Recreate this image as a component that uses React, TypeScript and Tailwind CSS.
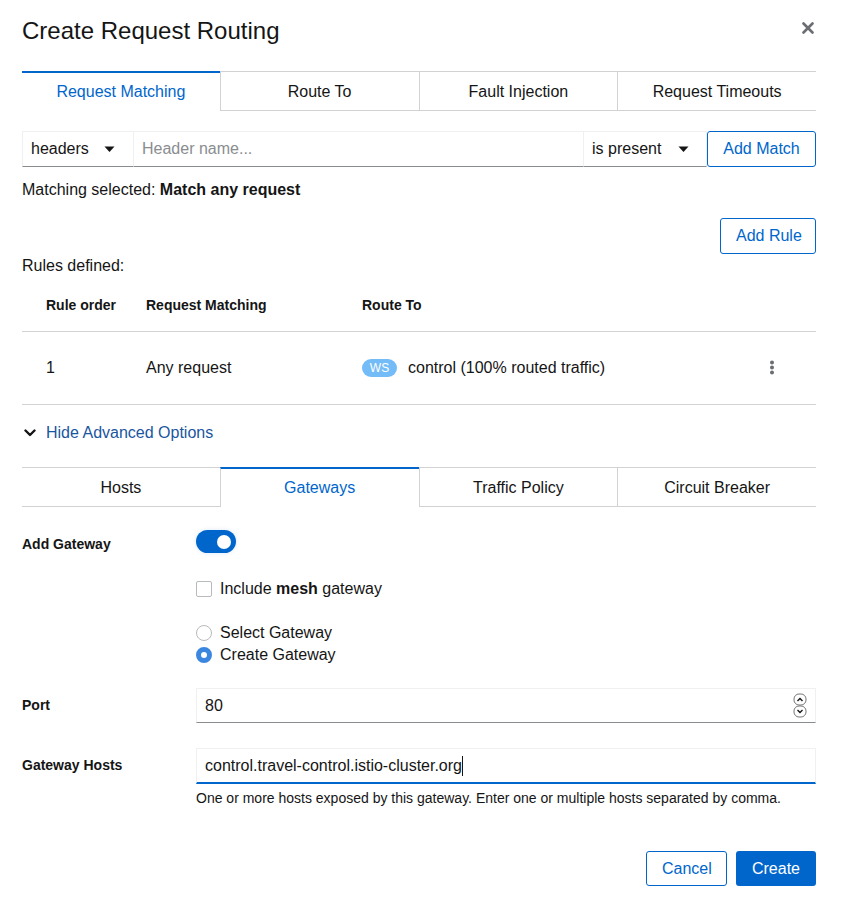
import React from 'react';

const BLUE = '#06c';

type TabsProps = {
    labels: string[];
    active: number;
};

const Tabs: React.FC<TabsProps> = ({ labels, active }) => (
    <div className="flex h-[40px]">
        {labels.map((label, i) => {
            const isActive = i === active;
            return (
                <div
                    key={label}
                    className={[
                        'flex-1 flex items-center justify-center text-[16px]',
                        i > 0 ? 'border-l border-[#d2d2d2]' : '',
                        isActive
                            ? 'border-t-2 border-t-[#06c] text-[#06c]'
                            : 'border-t border-b border-t-[#d2d2d2] border-b-[#d2d2d2] text-[#151515] pt-[1px]',
                    ].join(' ')}
                >
                    {label}
                </div>
            );
        })}
    </div>
);

const Caret: React.FC = () => (
    <svg width="11" height="7" viewBox="0 0 11 7" className="shrink-0">
        <path d="M0.5 0.5 H10.5 L5.5 6 Z" fill="#151515" />
    </svg>
);

const OutlineButton: React.FC<{ children: React.ReactNode; className?: string }> = ({ children, className }) => (
    <button
        className={`h-[35px] px-[15px] border border-[#06c] rounded-[3px] text-[16px] text-[#06c] bg-white whitespace-nowrap ${className ?? ''}`}
    >
        {children}
    </button>
);

const FormRow: React.FC<{ label: string; labelPad: string; children: React.ReactNode; className?: string }> = ({
    label,
    labelPad,
    children,
    className,
}) => (
    <div className={`flex ${className ?? ''}`}>
        <div className={`w-[174px] shrink-0 text-[14px] leading-[21px] font-bold text-[#151515] ${labelPad}`}>{label}</div>
        <div className="flex-1">{children}</div>
    </div>
);

export default function App() {
    return (
        <div className="w-[841px] h-[907px] bg-white pl-[22px] pr-[25px] pt-[14px] text-[#151515] font-['Liberation_Sans',Arial,sans-serif] overflow-hidden">
            {/* header */}
            <div className="flex items-start justify-between">
                <h1 className="text-[24px] leading-[33px] font-normal">Create Request Routing</h1>
                <button className="mt-[8px] mr-[2px]" aria-label="Close">
                    <svg width="12" height="12" viewBox="0 0 12 12">
                        <path d="M1.5 1.5 L10.5 10.5 M10.5 1.5 L1.5 10.5" stroke="#6a6e73" strokeWidth="2.6" strokeLinecap="round" />
                    </svg>
                </button>
            </div>

            <div className="mt-[24px]">
                <Tabs labels={['Request Matching', 'Route To', 'Fault Injection', 'Request Timeouts']} active={0} />
            </div>

            {/* match row */}
            <div className="mt-[20px] flex h-[36px]">
                <div className="w-[112px] flex items-center justify-between pl-[8px] pr-[18px] border border-[#f0f0f0] border-b-[#8a8d90] text-[16px]">
                    <span>headers</span>
                    <Caret />
                </div>
                <div className="flex-1 flex items-center px-[8px] border-t border-[#f0f0f0] border-b border-b-[#8a8d90] text-[16px] text-[#8a8d90]">
                    Header name...
                </div>
                <div className="w-[124px] flex items-center justify-between pl-[8px] pr-[17px] border border-[#f0f0f0] border-b-[#8a8d90] text-[16px]">
                    <span>is present</span>
                    <Caret />
                </div>
                <OutlineButton className="h-[36px] w-[109px] px-0">Add Match</OutlineButton>
            </div>

            <div className="mt-[11px] text-[16px] leading-[24px]">
                Matching selected: <span className="font-bold">Match any request</span>
            </div>

            <div className="mt-[16px] flex justify-end">
                <OutlineButton className="h-[36px] w-[96px] px-0">Add Rule</OutlineButton>
            </div>

            <div className="text-[16px] leading-[24px]">Rules defined:</div>

            {/* rules table */}
            <div className="mt-[2px]">
                <div className="flex items-center h-[52px] border-b border-[#d2d2d2] text-[14px] font-bold">
                    <div className="w-[124px] pl-[24px]">Rule order</div>
                    <div className="w-[216px]">Request Matching</div>
                    <div className="flex-1">Route To</div>
                </div>
                <div className="flex items-center h-[73px] border-b border-[#d2d2d2] text-[16px]">
                    <div className="w-[124px] pl-[24px]">1</div>
                    <div className="w-[216px]">Any request</div>
                    <div className="flex-1 flex items-center">
                        <span className="w-[35px] h-[18px] rounded-full bg-[#73bcf7] text-white text-[12px] flex items-center justify-center mr-[11px]">
                            WS
                        </span>
                        control (100% routed traffic)
                    </div>
                    <div className="w-[53px] flex justify-start pl-[6px]">
                        <svg width="6" height="16" viewBox="0 0 6 16">
                            <circle cx="3" cy="2.5" r="2" fill="#6a6e73" />
                            <circle cx="3" cy="7.5" r="2" fill="#6a6e73" />
                            <circle cx="3" cy="12.5" r="2" fill="#6a6e73" />
                        </svg>
                    </div>
                </div>
            </div>

            {/* advanced options toggle */}
            <div className="mt-[16px] flex items-center h-[24px] text-[16px] text-[#1a56a0]">
                <svg width="12" height="8" viewBox="0 0 12 8" className="ml-[2px] mr-[10px]">
                    <path d="M1.5 1.5 L6 6 L10.5 1.5" stroke="#151515" strokeWidth="2.4" fill="none" strokeLinecap="round" strokeLinejoin="round" />
                </svg>
                Hide Advanced Options
            </div>

            <div className="mt-[22px]">
                <Tabs labels={['Hosts', 'Gateways', 'Traffic Policy', 'Circuit Breaker']} active={1} />
            </div>

            {/* gateway form */}
            <FormRow label="Add Gateway" labelPad="pt-[4px]" className="mt-[23px]">
                <div className="w-[40px] h-[23px] rounded-full bg-[#06c] flex items-center justify-end pr-[5px] shadow-[0_0_4px_rgba(0,102,204,0.15)]">
                    <div className="w-[14px] h-[14px] rounded-full bg-white" />
                </div>
                <div className="mt-[24px] flex items-center h-[24px] text-[16px]">
                    <span className="w-[16px] h-[16px] border border-[#b8bbbe] rounded-[2px] mr-[8px]" />
                    Include&nbsp;<span className="font-bold">mesh</span>&nbsp;gateway
                </div>
                <div className="mt-[21px] flex items-center h-[22px] text-[16px]">
                    <span className="w-[16px] h-[16px] border border-[#b8bbbe] rounded-full mr-[8px]" />
                    Select Gateway
                </div>
                <div className="flex items-center h-[22px] text-[16px]">
                    <span className="w-[16px] h-[16px] rounded-full border-[5px] border-[#3b87e0] bg-white mr-[8px]" />
                    Create Gateway
                </div>
            </FormRow>

            <FormRow label="Port" labelPad="pt-[7px]" className="mt-[22px]">
                <div className="h-[35px] flex items-center justify-between pl-[8px] pr-[8px] border border-[#f0f0f0] border-b-[#8a8d90] text-[16px]">
                    <span>80</span>
                    <svg width="14" height="26" viewBox="0 0 14 26">
                        <rect x="1" y="1" width="12" height="11" rx="5" fill="none" stroke="#767676" strokeWidth="1" />
                        <rect x="1" y="13" width="12" height="11" rx="5" fill="none" stroke="#767676" strokeWidth="1" />
                        <path d="M4.5 8 L7 5.5 L9.5 8" stroke="#151515" strokeWidth="1.4" fill="none" />
                        <path d="M4.5 17 L7 19.5 L9.5 17" stroke="#151515" strokeWidth="1.4" fill="none" />
                    </svg>
                </div>
            </FormRow>

            <FormRow label="Gateway Hosts" labelPad="pt-[7px]" className="mt-[25px]">
                <div className="h-[36px] flex items-center pl-[8px] border border-[#f0f0f0] border-b-2 border-b-[#06c] text-[16px]">
                    <span>control.travel-control.istio-cluster.org</span>
                    <span className="w-[1px] h-[20px] bg-[#151515]" />
                </div>
                <div className="mt-[4px] text-[14px] leading-[21px]">
                    One or more hosts exposed by this gateway. Enter one or multiple hosts separated by comma.
                </div>
            </FormRow>

            {/* footer */}
            <div className="mt-[42px] flex justify-end gap-[9px]">
                <OutlineButton className="w-[81px] px-0">Cancel</OutlineButton>
                <button className="h-[35px] w-[80px] rounded-[3px] text-[16px] text-white" style={{ backgroundColor: BLUE }}>
                    Create
                </button>
            </div>
        </div>
    );
}
